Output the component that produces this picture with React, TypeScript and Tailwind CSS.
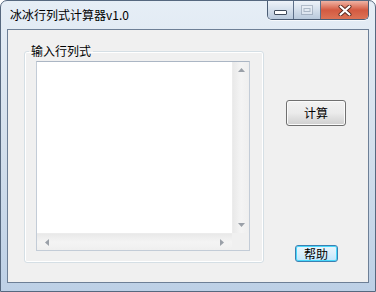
import React from "react"

const cjk = { fontFamily: '"Microsoft YaHei", "Noto Sans CJK SC", "Liberation Sans", sans-serif' }

function TitleButtons() {
  return (
    <div className="flex h-[19px] border border-t-0 border-[#4b5d75] rounded-b-[5px] overflow-hidden shadow-[0_1px_0_rgba(255,255,255,0.7)]">
      {/* minimize */}
      <div className="w-[26px] flex items-end justify-center pb-[4px] bg-gradient-to-b from-[#eef3f9] via-[#d4dfeb] to-[#b9c9dc] border-r border-[#5d6f88]">
        <svg width="13" height="5" viewBox="0 0 13 5">
          <rect x="0.5" y="0.5" width="12" height="4" rx="0.5" fill="#fff" stroke="#404c5c" />
        </svg>
      </div>
      {/* maximize (disabled) */}
      <div className="w-[27px] flex items-center justify-center bg-gradient-to-b from-[#eef3f9] via-[#d4dfeb] to-[#b9c9dc] border-r border-[#5d6f88]">
        <svg width="12" height="10" viewBox="0 0 12 10" opacity="0.45">
          <rect x="0.5" y="0.5" width="11" height="9" fill="#f4f7fb" stroke="#7a889a" />
          <rect x="3" y="3.5" width="6" height="3" fill="none" stroke="#7a889a" />
        </svg>
      </div>
      {/* close */}
      <div className="w-[47px] flex items-center justify-center bg-gradient-to-b from-[#eeb3a4] via-[#d35a41] to-[#dc7356]">
        <svg width="14" height="11" viewBox="0 0 14 11">
          <path d="M2.5 1.5 L11.5 9.5 M11.5 1.5 L2.5 9.5" stroke="#5a2a20" strokeWidth="4" strokeLinecap="round" />
          <path d="M2.5 1.5 L11.5 9.5 M11.5 1.5 L2.5 9.5" stroke="#ffffff" strokeWidth="2.2" strokeLinecap="round" />
        </svg>
      </div>
    </div>
  )
}

function Arrow({ dir }: { dir: "up" | "down" | "left" | "right" }) {
  const pts = {
    up: "0,4 3.5,0 7,4",
    down: "0,0 3.5,4 7,0",
    left: "4,0 0,3.5 4,7",
    right: "0,0 4,3.5 0,7",
  }[dir]
  const vertical = dir === "up" || dir === "down"
  return (
    <svg width={vertical ? 7 : 4} height={vertical ? 4 : 7} viewBox={vertical ? "0 0 7 4" : "0 0 4 7"}>
      <polygon points={pts} fill="#9aa0a8" />
    </svg>
  )
}

function TextBox() {
  return (
    <div className="w-[214px] h-[190px] flex flex-col border border-[#c3ccd7] border-t-[#abb6c4] bg-white">
      <div className="flex flex-1">
        <div className="flex-1" />
        <div className="w-[17px] flex flex-col justify-between items-center py-[6px] bg-gradient-to-r from-[#e9e9e9] via-[#f4f4f4] to-[#efefef] border-l border-[#ececec]">
          <Arrow dir="up" />
          <Arrow dir="down" />
        </div>
      </div>
      <div className="flex h-[17px]">
        <div className="flex-1 flex justify-between items-center px-[8px] bg-gradient-to-b from-[#e9e9e9] via-[#f4f4f4] to-[#efefef] border-t border-[#ececec]">
          <Arrow dir="left" />
          <Arrow dir="right" />
        </div>
        <div className="w-[17px] bg-[#f0f0f0]" />
      </div>
    </div>
  )
}

function WinButton({ children, primary }: { children: React.ReactNode; primary?: boolean }) {
  return (
    <div
      className={
        primary
          ? "w-[43px] h-[17px] rounded-[3px] border border-[#3c7fb1] shadow-[inset_0_0_0_1px_#48d8fb] bg-gradient-to-b from-[#eaf6fd] via-[#d9effc] to-[#bee6fd] flex items-center justify-center text-[12px] leading-none text-black"
          : "w-[60px] h-[26px] rounded-[3px] border border-[#707070] shadow-[inset_0_0_0_1px_#fbfbfb] bg-gradient-to-b from-[#f2f2f2] via-[#ebebeb] to-[#cfcfcf] flex items-center justify-center text-[12px] leading-none text-black"
      }
      style={cjk}
    >
      {children}
    </div>
  )
}

export default function App() {
  return (
    <div className="w-[376px] h-[292px] flex flex-col border border-[#56687f] rounded-t-[7px] bg-gradient-to-b from-[#e6eef6] via-[#d3dfec] to-[#bdd0e6] overflow-hidden" style={cjk}>
      {/* Title bar */}
      <div className="h-[28px] flex items-start">
        <span className="pl-[9px] pt-[7px] text-[12px] leading-[14px] text-black">冰冰行列式计算器v1.0</span>
        <div className="ml-auto mr-[6px]">
          <TitleButtons />
        </div>
      </div>

      {/* Client area */}
      <div className="mx-[6px] h-[254px] border border-[#6d7f96] bg-[#f0f0f0] flex">
        <div className="pl-[16px] pt-[14px]">
          <fieldset className="w-[240px] h-[219px] border border-[#d5dfe5] rounded-[3px] shadow-[inset_0_0_0_1px_#ffffff] pl-[11px] pt-[3px]">
            <legend className="ml-[-7px] px-[2px] text-[12px] leading-[14px] text-black">输入行列式</legend>
            <TextBox />
          </fieldset>
        </div>
        <div className="flex-1 flex flex-col items-center pt-[70px] pb-[20px]">
          <WinButton>计算</WinButton>
          <div className="mt-auto">
            <WinButton primary>帮助</WinButton>
          </div>
        </div>
      </div>
    </div>
  )
}
